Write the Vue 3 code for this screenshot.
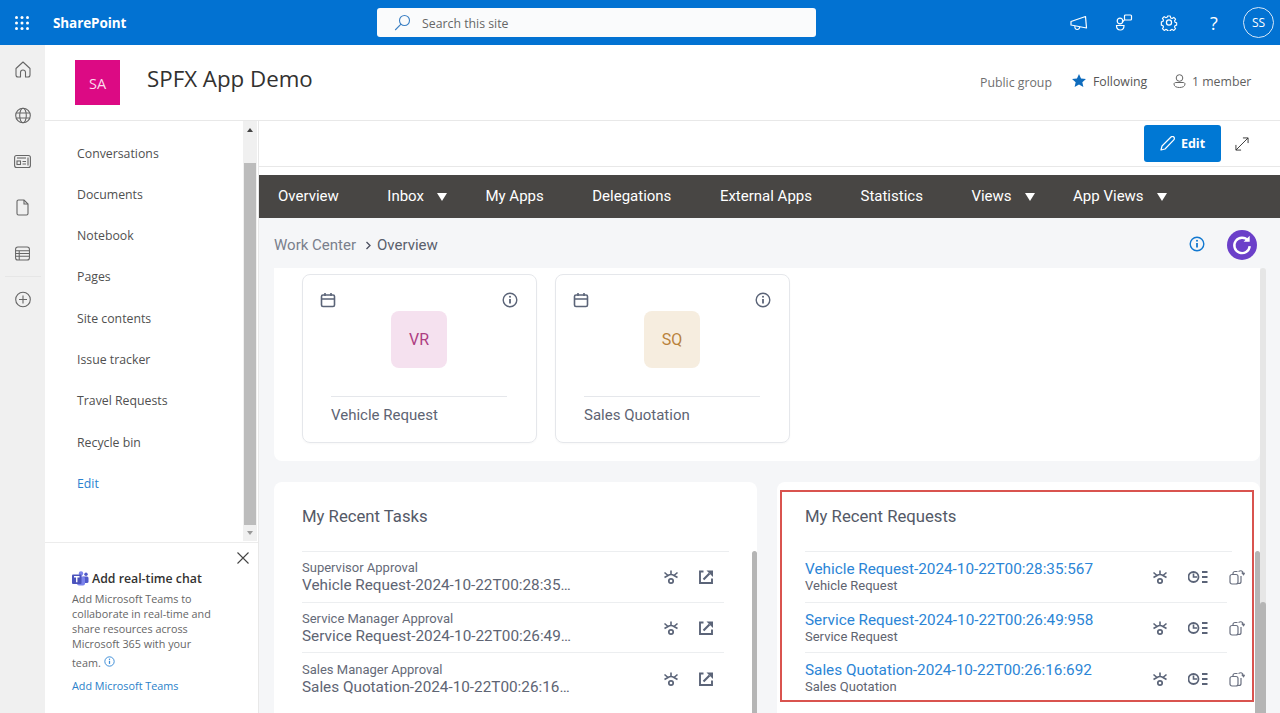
<template>
  <div class="page">
    <svg class="defs" width="0" height="0">
      <symbol id="flow" viewBox="0 0 16 16">
        <path d="M8 1.500v3.500M1.500 3.500 5 6.500M14.500 3.500 11 6.500M1.500 8.500 5 6.500c1.800-1.200 4.200-1.200 6 0l3.500 2" fill="none" stroke="currentColor" stroke-width="1.600" />
        <circle cx="8" cy="12" r="2.200" fill="none" stroke="currentColor" stroke-width="1.700" />
      </symbol>
      <symbol id="clocklist" viewBox="0 0 20 16">
        <circle cx="5.500" cy="8" r="5" fill="none" stroke="currentColor" stroke-width="1.800" />
        <path d="M5.500 4.500V8H9" fill="none" stroke="currentColor" stroke-width="1.600" />
        <path d="M14 3h5.500M14 8h5.500M14 13h5.500" stroke="currentColor" stroke-width="2" />
      </symbol>
      <symbol id="copy" viewBox="0 0 16 16">
        <rect x="1" y="5.500" width="8" height="9.500" rx="2" fill="none" stroke="currentColor" stroke-width="1.200" />
        <path d="M4 5.500V4.500A2 2 0 0 1 6 2.500h2.500M12 7v5.500a2 2 0 0 1-2 2H9" fill="none" stroke="currentColor" stroke-width="1.200" />
        <path d="M9.500 2.500c2.500-1.500 4.500-.8 5 2.500M12.700 3.600 14.600 5.700l1-2" fill="none" stroke="currentColor" stroke-width="1.100" />
      </symbol>
      <symbol id="external" viewBox="0 0 16 16">
        <path d="M5.500 2.500H2v11.500h12V9.500" fill="none" stroke="currentColor" stroke-width="1.900" />
        <path d="M5.500 10.500 11.500 4.500" fill="none" stroke="currentColor" stroke-width="2.200" />
        <path d="M8.500 1.500H15V8z" fill="currentColor" />
      </symbol>
      <symbol id="calendar" viewBox="0 0 16 16">
        <rect x="1.500" y="3" width="13" height="11.500" rx="1.500" fill="none" stroke="currentColor" stroke-width="1.600" />
        <path d="M1.500 7h13M5 1v3M11 1v3" fill="none" stroke="currentColor" stroke-width="1.600" />
      </symbol>
      <symbol id="info" viewBox="0 0 16 16">
        <circle cx="8" cy="8" r="6.800" fill="none" stroke="currentColor" stroke-width="1.400" />
        <path d="M8 7v4.500" stroke="currentColor" stroke-width="1.800" />
        <circle cx="8" cy="4.800" r="1" fill="currentColor" />
      </symbol>
    </svg>

    <header class="topbar">
      <svg class="waffle" width="14" height="14" viewBox="0 0 14 14" fill="#fff">
        <template v-for="x in [1.500, 7, 12.500]" :key="x">
          <circle v-for="y in [1.500, 7, 12.500]" :key="y" :cx="x" :cy="y" r="1.500" />
        </template>
      </svg>
      <span class="brand">SharePoint</span>
      <div class="search">
        <svg width="17" height="17" viewBox="0 0 17 17" fill="none" stroke="#3a7fc4" stroke-width="1.100">
          <circle cx="10.500" cy="6.500" r="5" />
          <path d="M7 10.200 1.200 16" />
        </svg>
        <span>Search this site</span>
      </div>
      <div class="top-icons">
        <svg width="18" height="16" viewBox="0 0 18 16" fill="none" stroke="#fff" stroke-width="1.200">
          <path d="M1 6.500 15.500 1.500l1 11.500L1 10z" stroke-linejoin="round" />
          <path d="M5 11c-.5 2 .5 3.500 2.200 3.500S9.500 13.500 9.800 12" />
        </svg>
        <svg width="17" height="17" viewBox="0 0 17 17" fill="none" stroke="#fff" stroke-width="1.200">
          <rect x="9" y="1" width="7" height="5" rx="1" />
          <path d="M9 6 6.500 8" />
          <circle cx="4.500" cy="7" r="2.800" />
          <path d="M1 11.500h7.500c0 3-1.500 4.500-3.700 4.500S1 14.500 1 11.500z" />
        </svg>
        <svg width="17" height="17" viewBox="0 0 20 20" fill="none" stroke="#fff" stroke-width="1.500">
          <circle cx="10" cy="10" r="3" />
          <path d="M8.300 1.500h3.400l.5 2.500 1.900.8 2.200-1.400 2.300 2.300-1.400 2.200.8 1.900 2 .5v3.200l-2 .5-.8 1.900 1.400 2.200-2.300 2.300-2.200-1.400-1.900.8-.5 1.500H8.300l-.5-1.500-1.900-.8-2.200 1.400-2.300-2.300 1.400-2.200-.8-1.900-2-.5V9.200l2-.5.8-1.900-1.400-2.200 2.300-2.300 2.200 1.400 1.900-.8z" transform="translate(1 1) scale(.9)" stroke-linejoin="round" />
        </svg>
        <span class="help">?</span>
      </div>
      <div class="avatar">SS</div>
    </header>

    <div class="body">
      <aside class="rail">
        <svg width="16" height="17" viewBox="0 0 16 17" fill="none" stroke="#666" stroke-width="1.100">
          <path d="M1 7.500 8 1l7 6.500V14a2 2 0 0 1-2 2h-2.500v-4.500a2.500 2.500 0 0 0-5 0V16H3a2 2 0 0 1-2-2z" stroke-linejoin="round" />
        </svg>
        <svg width="16" height="16" viewBox="0 0 16 16" fill="none" stroke="#666" stroke-width="1.100">
          <circle cx="8" cy="8" r="7.300" />
          <ellipse cx="8" cy="8" rx="3.300" ry="7.300" />
          <path d="M1.200 5.500h13.600M1.200 10.500h13.600" />
        </svg>
        <svg width="17" height="14" viewBox="0 0 17 14" fill="none" stroke="#666" stroke-width="1.100">
          <rect x=".6" y="1" width="15.800" height="12" rx="2" />
          <path d="M3 3.500h9" />
          <rect x="3" y="6.500" width="3.500" height="3.500" />
          <path d="M8.500 7h3.500M8.500 9.500h3.500M14 3v8" />
        </svg>
        <svg width="13" height="17" viewBox="0 0 13 17" fill="none" stroke="#666" stroke-width="1.100">
          <path d="M1 2.500A1.500 1.500 0 0 1 2.500 1H8l4 4v9.500a1.500 1.500 0 0 1-1.500 1.500h-8A1.500 1.500 0 0 1 1 14.500z" />
          <path d="M8 1v4h4" />
        </svg>
        <svg width="15" height="14" viewBox="0 0 16 15" fill="none" stroke="#666" stroke-width="1.100">
          <rect x=".6" y=".6" width="14.800" height="13.800" rx="2.500" />
          <path d="M.6 4.500h14.800M.6 7.500h14.800M.6 10.500h14.800M4.500 4.500v9.900" />
        </svg>
        <i class="rail-sep"></i>
        <svg width="16" height="16" viewBox="0 0 16 16" fill="none" stroke="#666" stroke-width="1.100">
          <circle cx="8" cy="8" r="7.300" />
          <path d="M8 4v8M4 8h8" />
        </svg>
      </aside>

      <div class="site">
        <section class="site-head">
          <div class="logo">SA</div>
          <h1>SPFX App Demo</h1>
          <div class="site-meta">
            <span class="group">Public group</span>
            <svg class="star" width="14" height="13" viewBox="0 0 15 14"><path d="M7.500 0l2.200 4.800 5.300.6-3.900 3.500 1.100 5.100-4.700-2.600L2.800 14l1.100-5.100L0 5.400l5.300-.6z" fill="#0f6cbd" /></svg>
            <span class="following">Following</span>
            <svg class="person" width="13" height="14" viewBox="0 0 13 14" fill="none" stroke="#666" stroke-width="1">
              <circle cx="6.500" cy="4" r="3.300" />
              <path d="M1 10c0-1 1-1.500 2-1.500h7c1 0 2 .5 2 1.500 0 2.500-2.500 3.500-5.500 3.500S1 12.500 1 10z" />
            </svg>
            <span class="members">1 member</span>
          </div>
        </section>

        <div class="columns">
          <nav class="sidenav">
            <div class="nav-scroll">
              <ul class="nav-list">
                <li v-for="item in navItems" :key="item">{{ item }}</li>
                <li class="nav-edit">Edit</li>
              </ul>
              <div class="nav-bar">
                <i class="arrow-up"></i>
                <div class="nav-thumb"></div>
                <i class="arrow-down"></i>
              </div>
            </div>
            <div class="teams">
              <svg class="close" width="12" height="12" viewBox="0 0 12 12" stroke="#444" stroke-width="1.100"><path d="M.5.500l11 11M11.500.500l-11 11" /></svg>
              <div class="teams-title">
                <svg width="17" height="15" viewBox="0 0 17 15">
                  <circle cx="9" cy="2.500" r="2.200" fill="#7b83eb" />
                  <circle cx="14" cy="3.200" r="1.700" fill="#5059c9" />
                  <rect x="10" y="5.500" width="6.500" height="6.500" rx="1.500" fill="#5059c9" />
                  <rect x="5" y="5.500" width="8" height="9" rx="2" fill="#7b83eb" />
                  <rect y="3.500" width="9.500" height="9.500" rx="1" fill="#4b53bc" />
                  <path d="M2 5.700h5.500M4.750 5.700v5.500" stroke="#fff" stroke-width="1.400" />
                </svg>
                <span>Add real-time chat</span>
              </div>
              <p>Add Microsoft Teams to collaborate in real-time and share resources across Microsoft 365 with your</p>
              <p class="team-line">team.
                <svg width="11" height="11" viewBox="0 0 16 16" class="blue-info"><use href="#info" /></svg>
              </p>
              <a>Add Microsoft Teams</a>
            </div>
          </nav>

          <main class="content">
            <div class="command">
              <button class="edit-btn">
                <svg width="15" height="15" viewBox="0 0 15 15" fill="none" stroke="#fff" stroke-width="1.200">
                  <path d="M1 14l1-4L11 1c.8-.8 2-.8 2.800 0s.8 2 0 2.800L5 13z" stroke-linejoin="round" />
                </svg>
                Edit
              </button>
              <svg class="expand" width="14" height="14" viewBox="0 0 15 15" fill="none" stroke="#333" stroke-width="1">
                <path d="M1 14 14 1M8.500 1H14v5.500M1 8.500V14h5.500" />
              </svg>
            </div>

            <div class="menu">
              <div v-for="m in menu" :key="m.label" class="menu-item">
                {{ m.label }}<i v-if="m.drop" class="caret"></i>
              </div>
            </div>

            <div class="work">
              <div class="crumb">
                <span class="crumb-root">Work Center</span>
                <svg width="7" height="9" viewBox="0 0 7 9" fill="none" stroke="#4b5060" stroke-width="1.300"><path d="M1.500 1l3.500 3.500L1.500 8" /></svg>
                <span class="crumb-now">Overview</span>
                <svg class="crumb-info" width="16" height="16" viewBox="0 0 16 16"><use href="#info" /></svg>
                <div class="refresh">
                  <svg width="22" height="22" viewBox="0 0 20 20" fill="none" stroke="#fff" stroke-width="2.200">
                    <path d="M15.500 6A7 7 0 1 0 17 11" />
                    <path d="M17 1.500V7h-5.500z" fill="#fff" stroke="none" />
                  </svg>
                </div>
              </div>

              <div class="scroll-row">
                <div class="scroll-col">
                  <section class="apps">
                    <article v-for="a in apps" :key="a.code" class="tile">
                      <div class="tile-icons">
                        <svg width="16" height="16"><use href="#calendar" /></svg>
                        <svg width="16" height="16"><use href="#info" /></svg>
                      </div>
                      <div class="tile-badge" :class="a.tone">{{ a.code }}</div>
                      <div class="tile-name">{{ a.name }}</div>
                    </article>
                  </section>

                  <div class="panels">
                    <section class="panel">
                      <h2>My Recent Tasks</h2>
                      <div v-for="t in tasks" :key="t.name" class="row">
                        <div class="row-text">
                          <div class="small">{{ t.step }}</div>
                          <div class="large">{{ t.name }}</div>
                        </div>
                        <svg class="ic" width="16" height="16"><use href="#flow" /></svg>
                        <svg class="ic ic-ext" width="16" height="16"><use href="#external" /></svg>
                      </div>
                      <i class="panel-thumb"></i>
                    </section>
                    <section class="panel">
                      <h2>My Recent Requests</h2>
                      <div v-for="r in requests" :key="r.name" class="row">
                        <div class="row-text wide">
                          <div class="link">{{ r.name }}</div>
                          <div class="small sub">{{ r.type }}</div>
                        </div>
                        <svg class="ic" width="16" height="16"><use href="#flow" /></svg>
                        <svg class="ic ic-clock" width="20" height="16"><use href="#clocklist" /></svg>
                        <svg class="ic ic-copy" width="16" height="16"><use href="#copy" /></svg>
                      </div>
                      <i class="panel-thumb"></i>
                      <div class="highlight"></div>
                    </section>
                  </div>
                </div>
                <div class="track"><div class="track-thumb"></div></div>
              </div>
            </div>
          </main>
        </div>
      </div>
    </div>
  </div>
</template>

<script setup>
const navItems = ['Conversations', 'Documents', 'Notebook', 'Pages', 'Site contents', 'Issue tracker', 'Travel Requests', 'Recycle bin']

const menu = [
  { label: 'Overview' },
  { label: 'Inbox', drop: true },
  { label: 'My Apps' },
  { label: 'Delegations' },
  { label: 'External Apps' },
  { label: 'Statistics' },
  { label: 'Views', drop: true },
  { label: 'App Views', drop: true }
]

const apps = [
  { code: 'VR', name: 'Vehicle Request', tone: 'pink' },
  { code: 'SQ', name: 'Sales Quotation', tone: 'sand' }
]

const tasks = [
  { step: 'Supervisor Approval', name: 'Vehicle Request-2024-10-22T00:28:35…' },
  { step: 'Service Manager Approval', name: 'Service Request-2024-10-22T00:26:49…' },
  { step: 'Sales Manager Approval', name: 'Sales Quotation-2024-10-22T00:26:16…' }
]

const requests = [
  { name: 'Vehicle Request-2024-10-22T00:28:35:567', type: 'Vehicle Request' },
  { name: 'Service Request-2024-10-22T00:26:49:958', type: 'Service Request' },
  { name: 'Sales Quotation-2024-10-22T00:26:16:692', type: 'Sales Quotation' }
]
</script>

<style>
html, body { margin: 0; overflow: hidden; }
</style>

<style scoped>
.page {
  width: 1280px;
  height: 713px;
  overflow: hidden;
  display: flex;
  flex-direction: column;
  font-family: "Open Sans", "Noto Sans", sans-serif;
  color: #323130;
  background: #fff;
}
.defs { position: absolute; }

.topbar {
  height: 45px;
  flex: none;
  background: #0272d2;
  display: flex;
  align-items: center;
  color: #fff;
}
.waffle { margin-left: 15px; }
.brand { margin-left: 24px; font-size: 13.500px; font-weight: 700; width: 324px; letter-spacing: -.1px; }
.search {
  width: 439px;
  height: 29px;
  background: #fafbfc;
  border-radius: 3px;
  display: flex;
  align-items: center;
  color: #666;
  font-size: 12.300px;
}
.search span { padding-top: 2px; }
.search svg { margin-left: 17px; margin-right: 11px; }
.top-icons { margin-left: 254px; display: flex; align-items: center; width: 146px; }
.top-icons svg, .help { width: 18px; margin-right: 27px; text-align: center; flex: none; }
.help { font-size: 18px; margin-right: 0; }
.avatar {
  margin-left: 27px;
  width: 29px;
  height: 29px;
  border: 1px solid #d5e6f7;
  border-radius: 50%;
  display: flex;
  align-items: center;
  justify-content: center;
  font-size: 12px;
  font-weight: 500;
  flex: none;
}

.body { flex: 1; display: flex; min-height: 0; }
.rail {
  width: 45px;
  flex: none;
  background: #f0f0f0;
  display: flex;
  flex-direction: column;
  align-items: center;
  padding-top: 16px;
}
.rail > svg { height: 17px; margin-bottom: 29px; }
.rail-sep { width: 36px; height: 1px; background: #e6e6e6; margin: -15px 0 14px; }

.site { flex: 1; min-width: 0; display: flex; flex-direction: column; }
.site-head {
  flex: none;
  border-bottom: 1px solid #e8e8e8;
  display: flex;
  align-items: flex-start;
  padding-left: 30px;
  padding-top: 15px;
  height: 60px;
}
.logo {
  width: 45px;
  height: 45px;
  background: #dc0a84;
  color: #fbdcec;
  display: flex;
  align-items: center;
  justify-content: center;
  font-size: 14.500px;
  padding-top: 1px;
  box-sizing: border-box;
  flex: none;
}
h1 { margin: 3px 0 0 27px; font-size: 22.300px; font-weight: 500; line-height: 32px; color: #323130; width: 833px; flex: none; }
.site-meta {
  display: flex;
  align-items: center;
  font-size: 12.300px;
  color: #5f5f5f;
  height: 42px;
  flex: none;
}
.group { color: #6f6f6f; width: 92px; padding-top: 3px; flex: none; white-space: nowrap; }
.star { margin-top: -2px; flex: none; }
.following { margin-left: 7px; width: 80px; flex: none; color: #555; }
.person { margin-top: -1px; flex: none; }
.members { margin-left: 6px; white-space: nowrap; }

.columns { flex: 1; min-height: 0; display: flex; }
.sidenav {
  width: 214px;
  flex: none;
  display: flex;
  flex-direction: column;
  border-right: 1px solid #e8e8e8;
  box-sizing: border-box;
}
.nav-scroll { height: 421px; flex: none; display: flex; border-bottom: 1px solid #ececec; }
.nav-list {
  list-style: none;
  margin: 0;
  padding: 22.600px 0 0 32px;
  flex: 1;
  font-size: 12.300px;
  color: #505050;
}
.nav-list li { height: 41.300px; line-height: 20px; }
.nav-edit { color: #2a82d0; }
.nav-bar {
  width: 14px;
  background: #f0f0f0;
  display: flex;
  flex-direction: column;
  align-items: center;
  margin-right: 1px;
  flex: none;
  height: 420px;
}
.nav-thumb { width: 12px; height: 362px; background: #bcbcbc; flex: none; }
.arrow-up, .arrow-down { width: 0; height: 0; border-left: 3.500px solid transparent; border-right: 3.500px solid transparent; flex: none; }
.arrow-up { border-bottom: 4px solid #444; margin: 7px 0 31px; }
.arrow-down { border-top: 4px solid #999; margin-top: 6px; }

.teams { position: relative; padding: 29px 0 0 27px; font-size: 10.800px; color: #666; line-height: 15px; }
.teams p { width: 144px; margin: 0; }
.close { position: absolute; right: 9px; top: 9px; }
.teams-title { display: flex; align-items: center; gap: 3px; font-size: 12.300px; font-weight: 600; color: #323130; margin-bottom: 5px; margin-top: -1px; }
.teams .team-line { margin-top: 4px; display: flex; align-items: center; gap: 3px; }
.blue-info { color: #3a8bd6; margin-top: -3px; }
.teams a { display: block; margin-top: 8px; color: #2a7fc9; }

.content { flex: 1; min-width: 0; display: flex; flex-direction: column; font-family: Roboto, sans-serif; }
.command {
  height: 45px;
  flex: none;
  border-bottom: 1px solid #e8e8e8;
  display: flex;
  align-items: center;
  justify-content: flex-end;
  padding-right: 31px;
  gap: 14px;
}
.edit-btn {
  width: 77px;
  height: 37px;
  border: 0;
  border-radius: 3px;
  background: #0078d4;
  color: #fff;
  display: flex;
  align-items: center;
  justify-content: center;
  gap: 6px;
  font-family: "Open Sans", sans-serif;
  font-size: 12.500px;
  font-weight: 700;
  padding: 0;
}
.menu {
  margin-top: 8px;
  height: 43px;
  flex: none;
  box-sizing: border-box;
  padding-bottom: 2px;
  background: #484644;
  display: flex;
  align-items: center;
  padding-left: 19px;
  gap: 48.500px;
  color: #fff;
  font-size: 15px;
  white-space: nowrap;
}
.menu-item { display: flex; align-items: center; }
.caret {
  width: 0;
  height: 0;
  border-left: 5px solid transparent;
  border-right: 5px solid transparent;
  border-top: 8px solid #fff;
  margin: 3px -10px 0 13px;
}

.work { flex: 1; min-height: 0; background: #f5f6f8; display: flex; flex-direction: column; }
.crumb {
  height: 50px;
  flex: none;
  display: flex;
  align-items: center;
  padding-left: 15px;
  padding-top: 4px;
  box-sizing: border-box;
  font-size: 15px;
}
.crumb-root { color: #7a7f8c; }
.crumb > svg:first-of-type { margin: 0 5px 0 9px; }
.crumb-now { color: #5a5f6c; }
.crumb-info { color: #1278d0; margin-left: 751px; margin-top: -3px; }
.refresh {
  width: 30px;
  height: 30px;
  border-radius: 50%;
  background: #6b3fc9;
  margin-left: 22px;
  display: flex;
  align-items: center;
  justify-content: center;
  flex: none;
}

.scroll-row { flex: 1; min-height: 0; display: flex; padding-left: 15px; overflow: hidden; }
.scroll-col { width: 986px; flex: none; }
.track { width: 6px; background: #e6e6e6; flex: none; border-radius: 3px 3px 0 0; }
.track-thumb { margin-top: 334px; height: 200px; background: #b5b5b5; border-radius: 3px 3px 0 0; }

.apps {
  height: 193px;
  background: #fff;
  border-radius: 0 0 8px 8px;
  display: flex;
  gap: 18px;
  padding: 6px 0 0 28px;
  box-sizing: border-box;
}
.tile {
  width: 235px;
  height: 169px;
  border: 1px solid #e5e7eb;
  border-radius: 8px;
  box-sizing: border-box;
  padding: 17px 18px 0 17px;
  box-shadow: 0 1px 2px rgba(0, 0, 0, .03);
}
.tile-icons { display: flex; justify-content: space-between; color: #5b6478; height: 16px; }
.tile-badge {
  width: 56px;
  height: 57px;
  border-radius: 8px;
  margin: 3px auto 0;
  display: flex;
  align-items: center;
  justify-content: center;
  font-size: 16px;
}
.pink { background: #f5e1ef; color: #ae3d82; }
.sand { background: #f6eddf; color: #b9823c; }
.tile-name {
  margin: 28px 11px 0 11px;
  border-top: 1px solid #e5e7eb;
  padding-top: 8px;
  font-size: 15px;
  line-height: 20px;
  color: #5e6473;
}

.panels { display: grid; grid-template-columns: 483px 483px; gap: 20px; margin-top: 21px; }
.panel { position: relative; background: #fff; border-radius: 8px 8px 0 0; padding: 0 28px; height: 240px; box-sizing: border-box; }
h2 { margin: 0; height: 69px; padding-top: 24px; box-sizing: border-box; font-size: 16.700px; line-height: 22px; font-weight: 400; color: #545967; }
.row {
  position: relative;
  height: 50.700px;
  display: flex;
  align-items: center;
  color: #5b6478;
}
.row::before { content: ""; position: absolute; left: 0; right: 5px; top: 0; height: 1px; background: #eceef0; }
.row:first-of-type::before { right: 0; }
.row-text { width: 272px; margin-right: 89px; margin-top: 1px; flex: none; }
.row-text.wide { width: 340px; margin-right: 7px; margin-top: 1.500px; }
.small { font-size: 13px; line-height: 17px; color: #656a78; white-space: nowrap; }
.sub { color: #5f6470; margin-top: -1px; }
.large { font-size: 15.300px; line-height: 18px; color: #5e6473; white-space: nowrap; }
.link { font-size: 15.300px; line-height: 18px; color: #2b85d6; white-space: nowrap; }
.ic { flex: none; margin-top: 2px; }
.ic-ext { margin-left: 19px; }
.ic-clock { margin-left: 20px; }
.ic-copy { margin-left: 21px; color: #6a7080; }
.panel-thumb { position: absolute; right: 0; top: 69px; width: 5px; height: 200px; background: #b5b5b5; border-radius: 3px 3px 0 0; }
.highlight { position: absolute; left: 3px; top: 8px; width: 474px; height: 212px; border: 2px solid #d9534f; box-sizing: border-box; pointer-events: none; }
</style>
